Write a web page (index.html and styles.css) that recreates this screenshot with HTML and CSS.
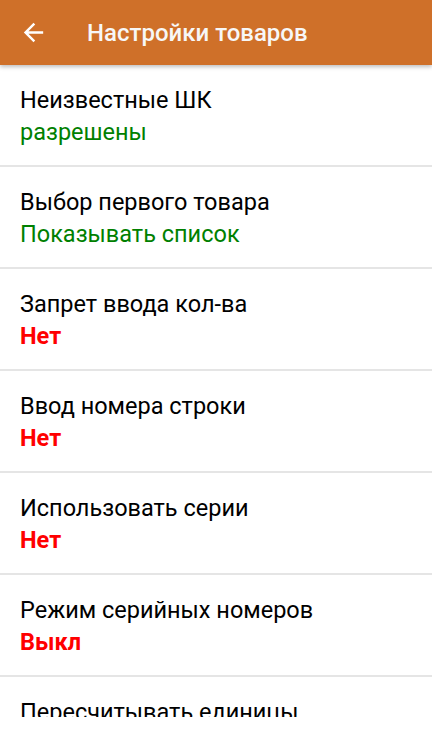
FILE: index.html
```html
<!DOCTYPE html>
<html lang="ru">
<head>
<meta charset="utf-8">
<link rel="stylesheet" href="styles.css">
</head>
<body>
<header class="appbar">
  <svg class="back" viewBox="0 0 24 24" width="29" height="29"><path d="M20 11H7.83l5.59-5.59L12 4l-8 8 8 8 1.41-1.41L7.83 13H20v-2z" fill="#fff"/></svg>
  <h1 class="title">Настройки товаров</h1>
</header>
<main class="list">
  <div class="row"><div class="label">Неизвестные ШК</div><div class="value ok">разрешены</div></div>
  <div class="row"><div class="label">Выбор первого товара</div><div class="value ok">Показывать список</div></div>
  <div class="row"><div class="label">Запрет ввода кол-ва</div><div class="value off">Нет</div></div>
  <div class="row"><div class="label">Ввод номера строки</div><div class="value off">Нет</div></div>
  <div class="row"><div class="label">Использовать серии</div><div class="value off">Нет</div></div>
  <div class="row"><div class="label">Режим серийных номеров</div><div class="value off">Выкл</div></div>
  <div class="row"><div class="label">Пересчитывать единицы</div></div>
</main>
</body>
</html>
```
FILE: styles.css
```css
html, body {
  margin: 0;
  padding: 0;
  background: #fff;
  font-family: Roboto, "Noto Sans", sans-serif;
  overflow: hidden;
  height: 738px;
}
.appbar {
  position: relative;
  z-index: 2;
  height: 65px;
  background: #cf7029;
  display: flex;
  align-items: center;
  box-shadow: 0 2px 4px rgba(0,0,0,0.25);
}
.back {
  margin-left: 19px;
  flex: none;
}
.title {
  margin: 0 0 0 39px;
  font-size: 24px;
  font-weight: 500;
  color: #f7f7f7;
}
.list {
  display: flex;
  flex-direction: column;
  height: 652px;
  overflow: hidden;
}
.row {
  flex: none;
  height: 102px;
  box-sizing: border-box;
  padding: 19px 20px 0;
  border-bottom: 2px solid #e5e5e5;
}
.label, .value {
  font-size: 23.5px;
  line-height: 32px;
  color: #000;
  white-space: nowrap;
}
.value.ok { color: #008000; }
.value.off { color: #ff0000; font-weight: 700; }
```
